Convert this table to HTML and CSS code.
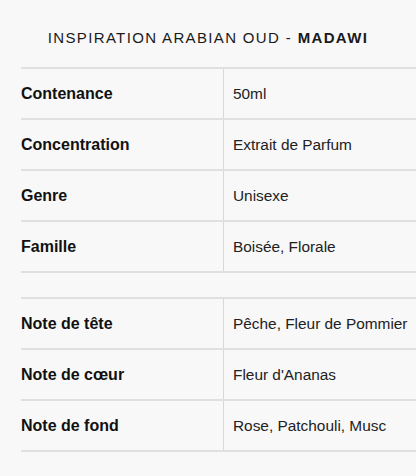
FILE: index.html
```html
<!DOCTYPE html>
<html lang="fr">
<head>
<meta charset="utf-8">
<link rel="stylesheet" href="styles.css">
</head>
<body>
<h1 class="title">INSPIRATION ARABIAN OUD - <strong>MADAWI</strong></h1>
<div class="specs">
  <div class="row"><div class="label">Contenance</div><div class="value">50ml</div></div>
  <div class="row"><div class="label">Concentration</div><div class="value">Extrait de Parfum</div></div>
  <div class="row"><div class="label">Genre</div><div class="value">Unisexe</div></div>
  <div class="row"><div class="label">Famille</div><div class="value">Boisée, Florale</div></div>
</div>
<div class="specs specs-notes">
  <div class="row"><div class="label">Note de tête</div><div class="value">Pêche, Fleur de Pommier</div></div>
  <div class="row"><div class="label">Note de cœur</div><div class="value">Fleur d'Ananas</div></div>
  <div class="row"><div class="label">Note de fond</div><div class="value">Rose, Patchouli, Musc</div></div>
</div>
</body>
</html>
```
FILE: styles.css
```css
html, body {
  margin: 0;
  padding: 0;
  background: #f8f8f8;
}
body {
  font-family: "Liberation Sans", Arial, sans-serif;
  color: #111;
  width: 416px;
  height: 476px;
  overflow: hidden;
}
.title {
  margin: 0;
  padding: 29px 0 20px;
  text-align: center;
  font-size: 15px;
  line-height: 18px;
  font-weight: normal;
  letter-spacing: 1.35px;
  color: #1a1a1a;
}
.title strong {
  font-weight: bold;
}
.specs {
  margin-left: 21px;
  border-top: 2px solid #e0e0e0;
}
.specs-notes {
  margin-top: 24px;
}
.row {
  display: grid;
  grid-template-columns: 202px 1fr;
  height: 49px;
  border-bottom: 2px solid #e0e0e0;
}
.label {
  display: flex;
  align-items: center;
  font-weight: bold;
  font-size: 16px;
  color: #111;
}
.value {
  display: flex;
  align-items: center;
  padding-left: 9px;
  border-left: 1.5px solid #d8d8d8;
  font-size: 15.4px;
  color: #222;
  white-space: nowrap;
}
```
